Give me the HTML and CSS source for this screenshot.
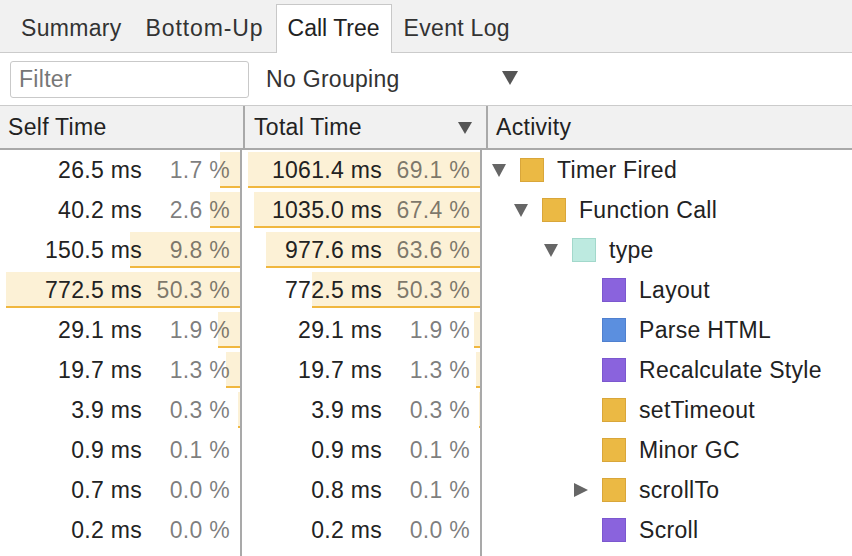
FILE: index.html
```html
<!DOCTYPE html>
<html>
<head>
<meta charset="utf-8">
<link rel="stylesheet" href="styles.css">
</head>
<body>
<div class="panel">
  <div class="tabs">
    <div class="tab">Summary</div>
    <div class="tab">Bottom-Up</div>
    <div class="tab selected">Call Tree</div>
    <div class="tab">Event Log</div>
  </div>
  <div class="toolbar">
    <div class="filter">Filter</div>
    <div class="grouping">No Grouping</div>
    <div class="select-arrow"></div>
  </div>
  <div class="header">
    <div class="hcell hself">Self Time</div>
    <div class="hcell htotal">Total Time<span class="sort-arrow"></span></div>
    <div class="hcell hact">Activity</div>
  </div>
  <div class="tree">
    <div class="cell time"><span class="bar" style="width:20px"></span><span class="ms">26.5 ms</span><span class="pct">1.7 %</span></div>
    <div class="cell time"><span class="bar" style="width:232px"></span><span class="ms">1061.4 ms</span><span class="pct">69.1 %</span></div>
    <div class="cell act l0"><span class="tri down"></span><span class="sq yellow"></span>Timer Fired</div>

    <div class="cell time"><span class="bar" style="width:30px"></span><span class="ms">40.2 ms</span><span class="pct">2.6 %</span></div>
    <div class="cell time"><span class="bar" style="width:226px"></span><span class="ms">1035.0 ms</span><span class="pct">67.4 %</span></div>
    <div class="cell act l1"><span class="tri down"></span><span class="sq yellow"></span>Function Call</div>

    <div class="cell time"><span class="bar" style="width:110px"></span><span class="ms">150.5 ms</span><span class="pct">9.8 %</span></div>
    <div class="cell time"><span class="bar" style="width:214px"></span><span class="ms">977.6 ms</span><span class="pct">63.6 %</span></div>
    <div class="cell act l2"><span class="tri down"></span><span class="sq teal"></span>type</div>

    <div class="cell time"><span class="bar" style="width:234px"></span><span class="ms">772.5 ms</span><span class="pct">50.3 %</span></div>
    <div class="cell time"><span class="bar" style="width:168px"></span><span class="ms">772.5 ms</span><span class="pct">50.3 %</span></div>
    <div class="cell act l3"><span class="tri"></span><span class="sq purple"></span>Layout</div>

    <div class="cell time"><span class="bar" style="width:22px"></span><span class="ms">29.1 ms</span><span class="pct">1.9 %</span></div>
    <div class="cell time"><span class="bar" style="width:6px"></span><span class="ms">29.1 ms</span><span class="pct">1.9 %</span></div>
    <div class="cell act l3"><span class="tri"></span><span class="sq blue"></span>Parse HTML</div>

    <div class="cell time"><span class="bar" style="width:14px"></span><span class="ms">19.7 ms</span><span class="pct">1.3 %</span></div>
    <div class="cell time"><span class="bar" style="width:4px"></span><span class="ms">19.7 ms</span><span class="pct">1.3 %</span></div>
    <div class="cell act l3"><span class="tri"></span><span class="sq purple"></span>Recalculate Style</div>

    <div class="cell time"><span class="bar" style="width:2px"></span><span class="ms">3.9 ms</span><span class="pct">0.3 %</span></div>
    <div class="cell time"><span class="bar" style="width:1px"></span><span class="ms">3.9 ms</span><span class="pct">0.3 %</span></div>
    <div class="cell act l3"><span class="tri"></span><span class="sq yellow"></span>setTimeout</div>

    <div class="cell time"><span class="ms">0.9 ms</span><span class="pct">0.1 %</span></div>
    <div class="cell time"><span class="ms">0.9 ms</span><span class="pct">0.1 %</span></div>
    <div class="cell act l3"><span class="tri"></span><span class="sq yellow"></span>Minor GC</div>

    <div class="cell time"><span class="ms">0.7 ms</span><span class="pct">0.0 %</span></div>
    <div class="cell time"><span class="ms">0.8 ms</span><span class="pct">0.1 %</span></div>
    <div class="cell act l3"><span class="tri right"></span><span class="sq yellow"></span>scrollTo</div>

    <div class="cell time"><span class="ms">0.2 ms</span><span class="pct">0.0 %</span></div>
    <div class="cell time"><span class="ms">0.2 ms</span><span class="pct">0.0 %</span></div>
    <div class="cell act l3"><span class="tri"></span><span class="sq purple"></span>Scroll</div>

    <div class="cell filler"></div>
    <div class="cell filler"></div>
    <div class="cell act filler"></div>
  </div>
</div>
</body>
</html>
```

FILE: styles.css
```css
* { box-sizing: border-box; }
html, body {
  margin: 0;
  padding: 0;
  background: #fff;
}
body {
  width: 852px;
  height: 556px;
  overflow: hidden;
  font-family: "Liberation Sans", Arial, sans-serif;
  font-size: 23px;
  letter-spacing: 0.3px;
  color: #222;
}
.panel {
  display: flex;
  flex-direction: column;
  height: 556px;
}
.tabs {
  display: flex;
  align-items: flex-end;
  height: 53px;
  padding-left: 9px;
  background: #f1f1f1;
  border-bottom: 1px solid #cbcbcb;
}
.tab {
  height: 49px;
  margin-bottom: -1px;
  padding: 0 11px;
  display: flex;
  align-items: center;
  padding-bottom: 1px;
  color: #333;
  border: 1px solid transparent;
  border-bottom: none;
}
.tab:nth-child(2) {
  letter-spacing: 0.9px;
}
.tab.selected {
  background: #fff;
  border-color: #c8c8c8;
  color: #222;
  letter-spacing: 0;
}
.toolbar {
  height: 53px;
  display: flex;
  align-items: center;
  padding-left: 10px;
  border-bottom: 1px solid #cbcbcb;
  background: #fff;
}
.filter {
  width: 239px;
  height: 37px;
  border: 1px solid #c9c9c9;
  border-radius: 3px;
  padding-left: 8px;
  display: flex;
  align-items: center;
  color: #777;
  margin-top: 1px;
}
.grouping {
  margin-left: 17px;
  width: 236px;
  color: #333;
}
.select-arrow {
  width: 0;
  height: 0;
  border-left: 8px solid transparent;
  border-right: 8px solid transparent;
  border-top: 14px solid #555;
  margin-top: -2px;
}
.header {
  display: flex;
  height: 44px;
  background: #f1f1f1;
  border-bottom: 2px solid #a9a9a9;
}
.hcell {
  display: flex;
  align-items: center;
  padding-left: 8px;
  padding-top: 1px;
}
.hself {
  width: 245px;
  border-right: 2px solid #a9a9a9;
}
.htotal {
  width: 243px;
  border-right: 2px solid #a9a9a9;
  padding-left: 9px;
}
.hact {
  flex: 1;
}
.sort-arrow {
  width: 0;
  height: 0;
  border-left: 7px solid transparent;
  border-right: 7px solid transparent;
  border-top: 12px solid #555;
  margin-left: auto;
  margin-right: 14px;
}
.tree {
  flex: 1;
  display: grid;
  grid-template-columns: 242px 240px 1fr;
  grid-template-rows: repeat(10, 40px) 1fr;
}
.cell {
  display: flex;
  align-items: center;
  white-space: nowrap;
}
.time {
  position: relative;
  justify-content: flex-end;
  padding-right: 10px;
  border-right: 2px solid #a9a9a9;
}
.bar {
  position: absolute;
  right: 0;
  top: 2px;
  height: 36px;
  background: #fcf1d6;
  border-bottom: 2px solid #f0b73f;
}
.ms, .pct {
  position: relative;
}
.pct {
  width: 88px;
  text-align: right;
  color: rgba(0, 0, 0, 0.52);
}
.act {
  padding-left: 10px;
}
.l1 { padding-left: 32px; }
.l2 { padding-left: 62px; }
.l3 { padding-left: 92px; }
.tri {
  width: 28px;
  height: 14px;
  flex: none;
  position: relative;
}
.tri.down::before {
  content: "";
  position: absolute;
  left: 0;
  top: 1px;
  border-left: 7px solid transparent;
  border-right: 7px solid transparent;
  border-top: 13px solid #666;
}
.tri.right::before {
  content: "";
  position: absolute;
  left: 0;
  top: 0;
  border-top: 7px solid transparent;
  border-bottom: 7px solid transparent;
  border-left: 14px solid #666;
}
.sq {
  width: 24px;
  height: 24px;
  flex: none;
  margin-right: 13px;
  border: 1px solid;
}
.yellow { background: #ebb944; border-color: #d9a63a; }
.teal { background: #bdeae0; border-color: #a2d8cb; }
.purple { background: #8a63dd; border-color: #7b57cf; }
.blue { background: #5b8fdf; border-color: #4f80cf; }
.filler {
  border-right: 2px solid #a9a9a9;
}
.act.filler {
  border-right: none;
}
```
